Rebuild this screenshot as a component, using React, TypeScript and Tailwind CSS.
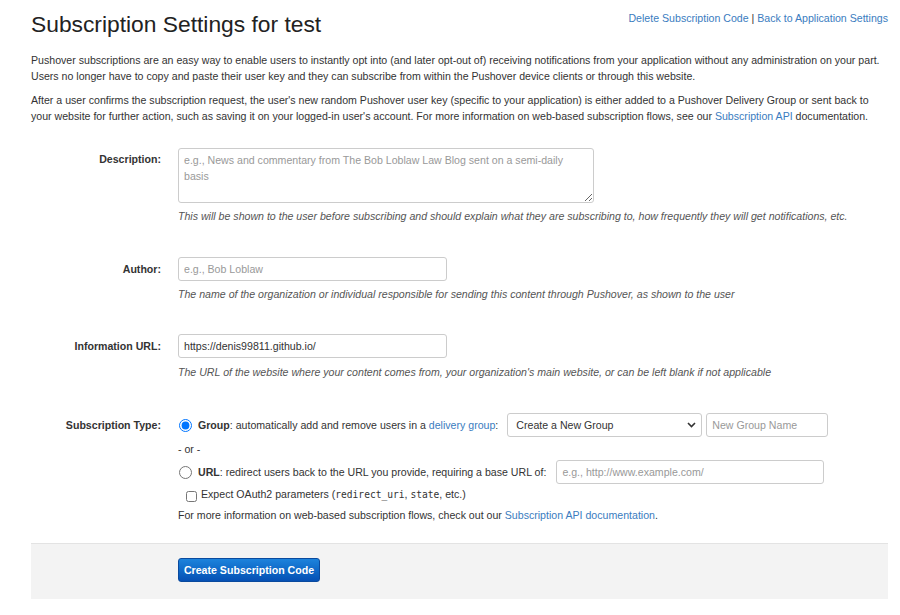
import React from 'react'

const Label = ({ children }: { children: React.ReactNode }) => (
    <div className="w-[130px] shrink-0 text-right font-bold text-[#333]">{children}</div>
)

const Help = ({ children, className = '' }: { children: React.ReactNode; className?: string }) => (
    <p className={`italic text-[#555] ${className || 'mt-[5px]'}`}>{children}</p>
)

const mono = { fontFamily: '"DejaVu Sans Mono", "Liberation Mono", monospace' }

const App = () => {
    return (
        <div className="min-h-[615px] bg-white text-[10.6px] leading-[16px] text-[#333]" style={{ fontFamily: '"Liberation Sans", Arial, sans-serif' }}>
            <div className="ml-[31px] w-[857px] pt-[9px]">
                <div className="flex items-start justify-between">
                    <h1 className="text-[22.8px] leading-[30px] font-normal text-[#222]">Subscription Settings for test</h1>
                    <div className="pt-[1px] text-[#3a7cc0]">
                        <a href="#" className="text-[#3a7cc0]">Delete Subscription Code</a>
                        <span className="text-[#333]"> | </span>
                        <a href="#" className="text-[#3a7cc0]">Back to Application Settings</a>
                    </div>
                </div>

                <p className="mt-[13px]">
                    Pushover subscriptions are an easy way to enable users to instantly opt into (and later opt-out of) receiving notifications from your application without any administration on your part. Users no longer have to copy and paste their user key and they can subscribe from within the Pushover device clients or through this website.
                </p>
                <p className="mt-[8px]">
                    After a user confirms the subscription request, the user's new random Pushover user key (specific to your application) is either added to a Pushover Delivery Group or sent back to your website for further action, such as saving it on your logged-in user's account. For more information on web-based subscription flows, see our <a href="#" className="text-[#3a7cc0]">Subscription API</a> documentation.
                </p>

                {/* description */}
                <div className="mt-[24px] flex gap-[17px]">
                    <div className="pt-[3px]"><Label>Description:</Label></div>
                    <div>
                        <textarea
                            className="block h-[55px] w-[416px] resize-y rounded-[3px] border border-[#ccc] px-[5px] py-[3px] leading-[16px] placeholder:text-[#999]"
                            placeholder="e.g., News and commentary from The Bob Loblaw Law Blog sent on a semi-daily basis"
                        />
                        <Help>This will be shown to the user before subscribing and should explain what they are subscribing to, how frequently they will get notifications, etc.</Help>
                    </div>
                </div>

                {/* author */}
                <div className="mt-[33px] flex items-start gap-[17px]">
                    <div className="pt-[4px]"><Label>Author:</Label></div>
                    <div>
                        <input className="block h-[24px] w-[269px] rounded-[3px] border border-[#ccc] px-[5px] placeholder:text-[#999]" placeholder="e.g., Bob Loblaw" />
                        <Help>The name of the organization or individual responsible for sending this content through Pushover, as shown to the user</Help>
                    </div>
                </div>

                {/* info url */}
                <div className="mt-[32px] flex items-start gap-[17px]">
                    <div className="pt-[4px]"><Label>Information URL:</Label></div>
                    <div>
                        <input className="block h-[24px] w-[269px] rounded-[3px] border border-[#ccc] px-[5px] text-[#333]" defaultValue="https://denis99811.github.io/" />
                        <Help className="mt-[6px]">The URL of the website where your content comes from, your organization's main website, or can be left blank if not applicable</Help>
                    </div>
                </div>

                {/* subscription type */}
                <div className="mt-[33px] flex items-start gap-[17px]">
                    <div className="pt-[4px]"><Label>Subscription Type:</Label></div>
                    <div>
                        <div className="flex items-center">
                            <input type="radio" name="type" defaultChecked className="ml-[1px] mr-[6px] h-[13px] w-[13px]" />
                            <span><b>Group</b>: automatically add and remove users in a <a href="#" className="text-[#3a7cc0]">delivery group</a>:</span>
                            <div className="relative ml-[9px]">
                                <select className="block h-[24px] w-[195px] appearance-none rounded-[3px] border border-[#ccc] bg-white pl-[8px] text-[10.6px] text-[#333]">
                                    <option>Create a New Group</option>
                                </select>
                                <svg className="pointer-events-none absolute right-[6px] top-[9px]" width="9" height="6" viewBox="0 0 9 6">
                                    <path d="M1 1l3.5 3.5L8 1" fill="none" stroke="#333" strokeWidth="1.6" />
                                </svg>
                            </div>
                            <input className="ml-[4px] h-[24px] w-[122px] rounded-[3px] border border-[#ccc] px-[5px] placeholder:text-[#999]" placeholder="New Group Name" />
                        </div>
                        <div className="mt-[4px]">- or -</div>
                        <div className="mt-[3px] flex items-center">
                            <input type="radio" name="type" className="ml-[1px] mr-[6px] h-[13px] w-[13px]" />
                            <span><b>URL</b>: redirect users back to the URL you provide, requiring a base URL of:</span>
                            <input className="ml-[10px] h-[24px] w-[268px] rounded-[3px] border border-[#ccc] px-[5px] placeholder:text-[#999]" placeholder="e.g., http://www.example.com/" />
                        </div>
                        <label className="ml-[8px] mt-[2px] flex items-center">
                            <input type="checkbox" className="mr-[4px] mt-[3px] h-[11px] w-[11px]" />
                            <span>Expect OAuth2 parameters (<code className="text-[9.6px]" style={mono}>redirect_uri</code>, <code className="text-[9.6px]" style={mono}>state</code>, etc.)</span>
                        </label>
                        <div className="mt-[4px]">For more information on web-based subscription flows, check out our <a href="#" className="text-[#3a7cc0]">Subscription API documentation</a>.</div>
                    </div>
                </div>

                {/* footer */}
                <div className="mt-[20px] h-[56px] border-t border-[#e3e3e3] bg-[#f3f3f3] pl-[147px] pt-[14px]">
                    <button className="h-[24px] w-[142px] rounded-[3px] border border-[#0a4a9e] bg-gradient-to-b from-[#1d83dc] to-[#0650b4] text-[10.6px] font-bold text-white">
                        Create Subscription Code
                    </button>
                </div>
            </div>
        </div>
    )
}

export default App
